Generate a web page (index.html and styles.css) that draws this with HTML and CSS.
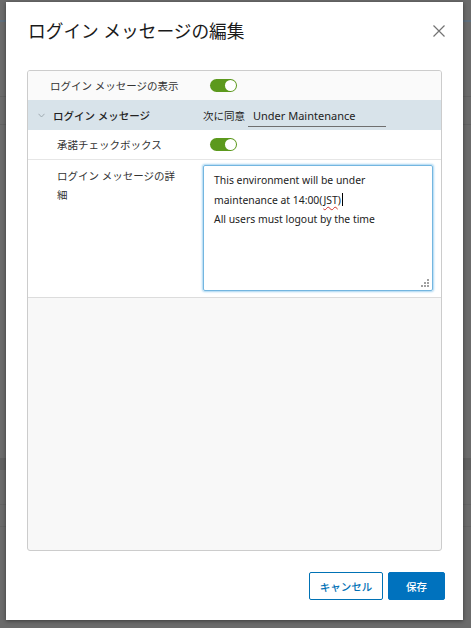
FILE: index.html
```html
<!DOCTYPE html>
<html lang="ja">
<head>
  <meta charset="UTF-8">
  <title>ログイン メッセージの編集</title>
  <link rel="stylesheet" href="styles.css">
</head>
<body>

  <div class="modal">
    <div class="modal-header">
      <h3 class="modal-title">ログイン メッセージの編集</h3>
      <button class="close" aria-label="閉じる">
        <svg width="12" height="12" viewBox="0 0 12 12"><path d="M0.5 0.5 L11.5 11.5 M11.5 0.5 L0.5 11.5" stroke="#737373" stroke-width="1.2" fill="none"/></svg>
      </button>
    </div>

    <div class="panel">
      <div class="row row-first">
        <div class="label">ログイン メッセージの表示</div>
        <div class="value"><span class="toggle"></span></div>
      </div>

      <div class="row row-group">
        <div class="label label-group">
          <svg class="chevron" width="7" height="5" viewBox="0 0 7 5"><path d="M0.5 0.8 L3.5 4 L6.5 0.8" stroke="#9aa5ad" stroke-width="0.9" fill="none"/></svg>
          ログイン メッセージ
        </div>
        <div class="value">
          <span class="inline-label">次に同意</span>
          <input class="line-input" type="text" value="Under Maintenance">
        </div>
      </div>

      <div class="row row-sub">
        <div class="label label-sub">承諾チェックボックス</div>
        <div class="value"><span class="toggle"></span></div>
      </div>

      <div class="row row-detail">
        <div class="label label-sub label-wrap">ログイン メッセージの詳細</div>
        <div class="value">
          <div class="textarea" role="textbox">
            <div>This environment will be under</div>
            <div>maintenance at 14:00(<span class="misspelled">JST</span>)<span class="caret"></span></div>
            <div>All users must logout by the time</div>
            <svg class="grip" width="8" height="8" viewBox="0 0 8 8" fill="#a0a0a0">
              <rect x="6" y="0" width="2" height="2"/>
              <rect x="3" y="3" width="2" height="2"/><rect x="6" y="3" width="2" height="2"/>
              <rect x="0" y="6" width="2" height="2"/><rect x="3" y="6" width="2" height="2"/><rect x="6" y="6" width="2" height="2"/>
            </svg>
          </div>
        </div>
      </div>
    </div>

    <div class="modal-footer">
      <button class="btn btn-outline">キャンセル</button>
      <button class="btn btn-primary">保存</button>
    </div>
  </div>

</body>
</html>
```

FILE: styles.css
```css
body {
  margin: 0;
  width: 471px;
  height: 628px;
  overflow: hidden;
  font-family: "Noto Sans", "Noto Sans CJK JP", sans-serif;
  color: #333;
  background-color: #6b6b6b;
  background-image:
    linear-gradient(#5f6f7d, #5f6f7d),
    linear-gradient(#626262, #626262),
    linear-gradient(#626262, #626262),
    linear-gradient(#606060, #606060),
    linear-gradient(#646464, #646464),
    linear-gradient(#646464, #646464);
  background-size: 100% 2px, 100% 1px, 100% 1px, 100% 12px, 100% 1px, 100% 1px;
  background-position: 0 20px, 0 96px, 0 124px, 0 458px, 0 504px, 0 526px;
  background-repeat: no-repeat;
}

.modal {
  box-sizing: border-box;
  width: 457px;
  height: 618px;
  margin: 2px 0 0 6px;
  padding: 0 21px;
  background: #fff;
  box-shadow: 0 1px 4px rgba(0,0,0,0.45);
  display: flex;
  flex-direction: column;
}

.modal-header {
  display: flex;
  align-items: center;
  justify-content: space-between;
  padding-top: 16px;
  height: 26px;
  margin-bottom: 26px;
}

.modal-title {
  margin: 0;
  font-size: 17.7px;
  font-weight: normal;
  color: #1a1a1a;
  line-height: 26px;
  padding-left: 1px;
}

.close {
  border: none;
  background: none;
  padding: 0;
  margin-right: -3px;
  width: 12px;
  height: 12px;
  display: flex;
}

.panel {
  box-sizing: border-box;
  height: 481px;
  border: 1px solid #cccccc;
  border-radius: 3px;
  background: #f8f8f8;
  overflow: hidden;
}

.row {
  display: flex;
  align-items: center;
  height: 30px;
  font-size: 10.5px;
}

.row-first {
  height: 29px;
  background: #fafafa;
}

.row-group {
  background: #d8e3ea;
}

.row-sub {
  background: #fff;
  border-bottom: 1px solid #e6e6e6;
  height: 29px;
}

.row-detail {
  align-items: flex-start;
  height: auto;
  padding: 5px 0 6px;
  background: #fff;
  border-bottom: 1px solid #dcdcdc;
}

.label {
  box-sizing: border-box;
  width: 175px;
  flex: none;
  padding-left: 22px;
  color: #333;
}

.label-group {
  display: flex;
  align-items: center;
  padding-left: 10px;
  font-weight: 500;
  color: #222;
}

.chevron {
  margin-right: 8px;
}

.label-sub {
  padding-left: 29px;
}

.label-wrap {
  padding-right: 24px;
  padding-top: 2px;
  line-height: 19px;
}

.value {
  display: flex;
  align-items: center;
}

.toggle {
  position: relative;
  display: block;
  width: 27px;
  height: 13px;
  margin-left: 7px;
  border-radius: 7px;
  background: #5c991d;
}

.toggle::after {
  content: "";
  position: absolute;
  right: 1px;
  top: 1px;
  width: 11px;
  height: 11px;
  border-radius: 50%;
  background: #fff;
}

.inline-label {
  color: #222;
  margin-right: 3px;
}

.line-input {
  box-sizing: border-box;
  width: 138px;
  height: 22px;
  margin-top: 2px;
  padding: 0 5px;
  border: none;
  border-bottom: 1px solid #6f6f6f;
  background: transparent;
  font-family: "Noto Sans", sans-serif;
  font-size: 11px;
  color: #222;
  outline: none;
}

.textarea {
  position: relative;
  box-sizing: border-box;
  width: 230px;
  height: 126px;
  padding: 5px 10px;
  border: 1px solid #74b6e0;
  border-radius: 2px;
  box-shadow: 0 0 2px 1px #a9d6f2;
  font-family: "Noto Sans", sans-serif;
  font-size: 10.4px;
  line-height: 19.7px;
  color: #222;
}

.misspelled {
  text-decoration: underline wavy #d0302a;
  text-decoration-thickness: 1px;
  text-underline-offset: 2px;
}

.caret {
  display: inline-block;
  width: 1px;
  height: 13px;
  margin-left: 1px;
  vertical-align: -2px;
  background: #000;
}

.grip {
  position: absolute;
  right: 3px;
  bottom: 3px;
}

.modal-footer {
  display: flex;
  justify-content: flex-end;
  gap: 5px;
  margin-top: 21px;
  margin-right: -3px;
}

.btn {
  box-sizing: border-box;
  height: 28px;
  border-radius: 2px;
  font-family: "Noto Sans", "Noto Sans CJK JP", sans-serif;
  font-size: 10.5px;
  font-weight: 500;
  padding: 0;
}

.btn-outline {
  width: 74px;
  border: 1px solid #0072b5;
  background: #fff;
  color: #0070b5;
}

.btn-primary {
  width: 57px;
  border: 1px solid #0072be;
  background: #0072be;
  color: #fff;
}
```
